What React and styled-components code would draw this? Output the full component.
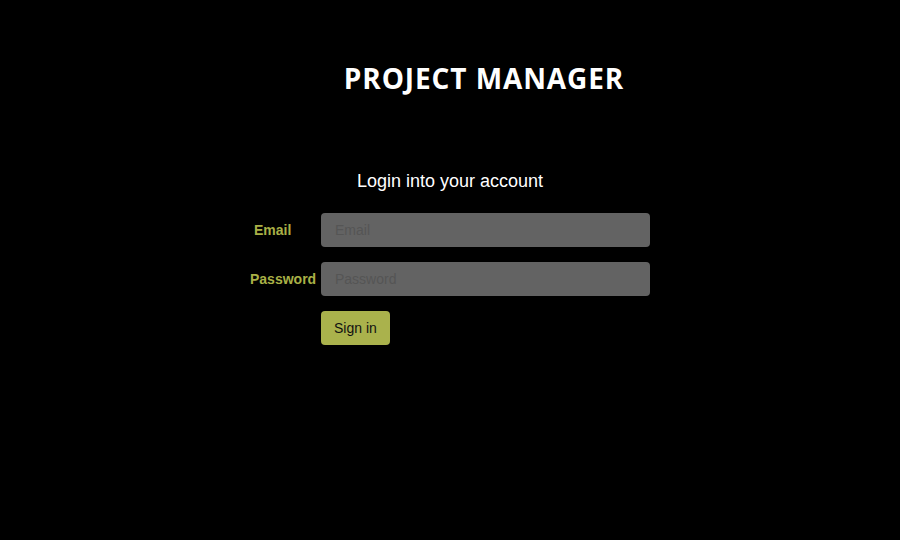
import React from "react";
import styled, { createGlobalStyle } from "styled-components";

const Global = createGlobalStyle`
  html, body { margin: 0; padding: 0; background: #000; }
  body { width: 900px; height: 540px; overflow: hidden; font-family: "Liberation Sans", Arial, sans-serif; }
`;

const Page = styled.div`
  width: 900px;
  height: 540px;
  background: #000;
  display: flex;
  flex-direction: column;
  align-items: center;
`;

const Title = styled.h1`
  margin: 60px 0 0 68px;
  font-family: "Open Sans", "Noto Sans", sans-serif;
  font-weight: 700;
  font-size: 28px;
  line-height: 36px;
  color: #fff;
  letter-spacing: 0.9px;
`;

const Heading = styled.h2`
  margin: 74px 0 0 0;
  font-family: "Liberation Sans", Arial, sans-serif;
  font-weight: 400;
  font-size: 18px;
  line-height: 22px;
  color: #fff;
`;

const Wrapper = styled.div`
  width: 900px;
  display: flex;
  padding-left: 245px;
  box-sizing: border-box;
`;

const Form = styled.form`
  margin-top: 21px;
  display: grid;
  grid-template-columns: 76px 329px;
  row-gap: 15px;
  align-items: center;
`;

const Label = styled.label`
  padding-left: ${(p) => p.$indent}px;
  font-family: "Liberation Sans", Arial, sans-serif;
  font-weight: 700;
  font-size: 14px;
  color: #a9b046;
  white-space: nowrap;
`;

const Input = styled.input`
  box-sizing: border-box;
  height: 34px;
  width: 329px;
  border: none;
  border-radius: 4px;
  background: #636363;
  padding: 0 14px;
  font-family: "Liberation Sans", Arial, sans-serif;
  font-size: 14px;
  color: #222;
  outline: none;
  &::placeholder { color: #555; }
`;

const Button = styled.button`
  grid-column: 2;
  justify-self: start;
  height: 34px;
  padding: 0 13px;
  border: none;
  border-radius: 4px;
  background: #aab24c;
  color: #111;
  font-family: "Liberation Sans", Arial, sans-serif;
  font-size: 14px;
  cursor: pointer;
`;

export default function App() {
  return (
    <>
      <Global />
      <Page>
        <Title>PROJECT MANAGER</Title>
        <Heading>Login into your account</Heading>
        <Wrapper>
          <Form onSubmit={(e) => e.preventDefault()}>
            <Label $indent={9}>Email</Label>
            <Input type="email" placeholder="Email" />
            <Label $indent={5}>Password</Label>
            <Input type="password" placeholder="Password" />
            <Button type="submit">Sign in</Button>
          </Form>
        </Wrapper>
      </Page>
    </>
  );
}
